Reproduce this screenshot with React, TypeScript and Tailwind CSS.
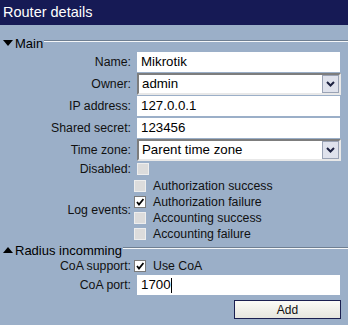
import React from "react";

const font = { fontFamily: '"Liberation Sans", Arial, sans-serif' };

function Legend({ label, up }: { label: string; up?: boolean }) {
  return (
    <div className="flex items-center h-[16px]">
      <svg width="10" height="6" viewBox="0 0 10 6" className="ml-[3px] mr-[2px]">
        {up ? <polygon points="0,6 10,6 5,0" fill="#000" /> : <polygon points="0,0 10,0 5,6" fill="#000" />}
      </svg>
      <span className="text-[13px] leading-none text-black">{label}</span>
      <div className="flex-1 ml-[1px] mt-[-4px] border-t border-t-[#6f7f92] border-b border-b-[#f4f6f8] h-[2px]" />
    </div>
  );
}

function Row({ label, children, h, mt = 0 }: { label: string; children: React.ReactNode; h: number; mt?: number }) {
  return (
    <div className="flex items-center" style={{ height: h, marginTop: mt }}>
      <div className="w-[132px] text-right text-[12.3px] text-[#111] pr-[1px] leading-none">{label}</div>
      <div className="flex items-center">{children}</div>
    </div>
  );
}

function Input({ value, cursor }: { value: string; cursor?: boolean }) {
  return (
    <div className="ml-[5px] w-[203px] h-[20px] bg-white flex items-center pl-[4px] text-[13.3px] text-black leading-none">
      {value}
      {cursor && <span className="inline-block w-[1px] h-[15px] bg-black ml-[0px]" />}
    </div>
  );
}

function Select({ value }: { value: string }) {
  return (
    <div className="ml-[5px] w-[204px] h-[22px] bg-white border-2 border-t-[#7d7d7d] border-l-[#7d7d7d] border-r-[#e8e8e8] border-b-[#e8e8e8] flex items-center">
      <span className="flex-1 pl-[3px] text-[13.3px] text-black leading-none">{value}</span>
      <div className="w-[17px] h-[18px] bg-[#dfe2ec] border border-[#9aa3b5] flex items-center justify-center">
        <svg width="9" height="6" viewBox="0 0 9 6">
          <polyline points="1,1 4.5,4.5 8,1" fill="none" stroke="#1c2140" strokeWidth="2" />
        </svg>
      </div>
    </div>
  );
}

function Check({ checked, ml = 0 }: { checked?: boolean; ml?: number }) {
  return (
    <div
      className={
        "w-[12px] h-[12px] border flex items-center justify-center " +
        (checked ? "bg-white border-[#7a7a7a]" : "bg-[#dcdcdc] border-[#eeeeee]")
      }
      style={{ marginLeft: ml }}
    >
      {checked && (
        <svg width="8" height="8" viewBox="0 0 8 8">
          <polyline points="1,4 3,6.5 7.5,1" fill="none" stroke="#000" strokeWidth="1.8" />
        </svg>
      )}
    </div>
  );
}

function CheckItem({ label, checked }: { label: string; checked?: boolean }) {
  return (
    <div className="flex items-center h-[16px]">
      <Check checked={checked} ml={2} />
      <span className="ml-[7px] text-[12.3px] text-[#111] leading-none">{label}</span>
    </div>
  );
}

export default function App() {
  return (
    <div className="w-[348px] h-[325px] bg-[#9bafc8] overflow-hidden" style={font}>
      <div className="h-[25px] bg-[#161a55] flex items-center pl-[3px]">
        <span className="text-white text-[14.5px] leading-none">Router details</span>
      </div>
      <div className="mt-[10px]">
        <Legend label="Main" />
      </div>
      <div className="mt-[1px]">
        <Row label="Name:" h={20}>
          <Input value="Mikrotik" />
        </Row>
        <Row label="Owner:" h={22} mt={1}>
          <Select value="admin" />
        </Row>
        <Row label="IP address:" h={20} mt={1}>
          <Input value="127.0.0.1" />
        </Row>
        <Row label="Shared secret:" h={20} mt={2}>
          <Input value="123456" />
        </Row>
        <Row label="Time zone:" h={22} mt={1}>
          <Select value="Parent time zone" />
        </Row>
        <Row label="Disabled:" h={14} mt={1}>
          <Check ml={5} />
        </Row>
        <div className="flex items-center mt-[2px]">
          <div className="w-[132px] text-right text-[12.3px] text-[#111] pr-[1px] leading-none">Log events:</div>
          <div className="flex flex-col">
            <CheckItem label="Authorization success" />
            <CheckItem label="Authorization failure" checked />
            <CheckItem label="Accounting success" />
            <CheckItem label="Accounting failure" />
          </div>
        </div>
      </div>
      <div className="mt-[0px]">
        <Legend label="Radius incomming" up />
      </div>
      <Row label="CoA support:" h={16} mt={0}>
        <div className="flex items-center">
          <Check checked ml={2} />
          <span className="ml-[7px] text-[12.3px] text-[#111] leading-none">Use CoA</span>
        </div>
      </Row>
      <Row label="CoA port:" h={20} mt={1}>
        <Input value="1700" cursor />
      </Row>
      <div className="flex justify-end pr-[7px] mt-[5px]">
        <button className="w-[107px] h-[19px] border border-[#1a1f50] bg-gradient-to-b from-[#fbfbf7] to-[#e6e6de] text-[12px] text-[#111] leading-none flex items-center justify-center">
          Add
        </button>
      </div>
    </div>
  );
}
